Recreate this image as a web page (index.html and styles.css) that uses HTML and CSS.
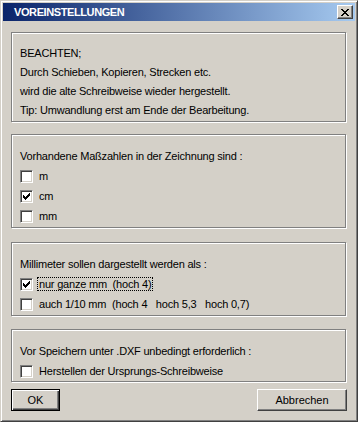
FILE: index.html
```html
<!DOCTYPE html>
<html lang="de">
<head>
  <meta charset="UTF-8" />
  <title>Voreinstellungen</title>
  <link rel="stylesheet" href="styles.css">
</head>
<body>
  <div class="window">
    <div class="titlebar">
      <span class="title">VOREINSTELLUNGEN</span>
      <button class="close" title="Schließen">
        <svg width="8" height="7" viewBox="0 0 8 7" shape-rendering="crispEdges">
          <path d="M0 0h2v1h-2zM6 0h2v1h-2zM1 1h2v1h-2zM5 1h2v1h-2zM2 2h4v1h-4zM3 3h2v1h-2zM2 4h4v1h-4zM1 5h2v1h-2zM5 5h2v1h-2zM0 6h2v1h-2zM6 6h2v1h-2z" fill="#000"/>
        </svg>
      </button>
    </div>

    <div class="group note">
      <div class="line">BEACHTEN;</div>
      <div class="line">Durch Schieben, Kopieren, Strecken etc.</div>
      <div class="line">wird die alte Schreibweise wieder hergestellt.</div>
      <div class="line">Tip: Umwandlung erst am Ende der Bearbeitung.</div>
    </div>

    <div class="group units">
      <div class="line">Vorhandene Maßzahlen in der Zeichnung sind :</div>
      <label class="check"><span class="box"><svg class="tick" width="7" height="7" viewBox="0 0 7 7" shape-rendering="crispEdges"><path d="M6 0h1v3h-1zM5 1h1v3h-1zM4 2h1v3h-1zM0 2h1v3h-1zM1 3h1v3h-1zM3 3h1v3h-1zM2 4h1v3h-1z"/></svg></span><span class="text">m</span></label>
      <label class="check"><span class="box checked"><svg class="tick" width="7" height="7" viewBox="0 0 7 7" shape-rendering="crispEdges"><path d="M6 0h1v3h-1zM5 1h1v3h-1zM4 2h1v3h-1zM0 2h1v3h-1zM1 3h1v3h-1zM3 3h1v3h-1zM2 4h1v3h-1z"/></svg></span><span class="text">cm</span></label>
      <label class="check"><span class="box"><svg class="tick" width="7" height="7" viewBox="0 0 7 7" shape-rendering="crispEdges"><path d="M6 0h1v3h-1zM5 1h1v3h-1zM4 2h1v3h-1zM0 2h1v3h-1zM1 3h1v3h-1zM3 3h1v3h-1zM2 4h1v3h-1z"/></svg></span><span class="text">mm</span></label>
    </div>

    <div class="group millis">
      <div class="line">Millimeter sollen dargestellt werden als :</div>
      <label class="check"><span class="box checked"><svg class="tick" width="7" height="7" viewBox="0 0 7 7" shape-rendering="crispEdges"><path d="M6 0h1v3h-1zM5 1h1v3h-1zM4 2h1v3h-1zM0 2h1v3h-1zM1 3h1v3h-1zM3 3h1v3h-1zM2 4h1v3h-1z"/></svg></span><span class="text focus">nur ganze mm  (hoch 4)</span></label>
      <label class="check"><span class="box"><svg class="tick" width="7" height="7" viewBox="0 0 7 7" shape-rendering="crispEdges"><path d="M6 0h1v3h-1zM5 1h1v3h-1zM4 2h1v3h-1zM0 2h1v3h-1zM1 3h1v3h-1zM3 3h1v3h-1zM2 4h1v3h-1z"/></svg></span><span class="text">auch 1/10 mm  (hoch 4   hoch 5,3   hoch 0,7)</span></label>
    </div>

    <div class="group dxf">
      <div class="line">Vor Speichern unter .DXF unbedingt erforderlich :</div>
      <label class="check"><span class="box"><svg class="tick" width="7" height="7" viewBox="0 0 7 7" shape-rendering="crispEdges"><path d="M6 0h1v3h-1zM5 1h1v3h-1zM4 2h1v3h-1zM0 2h1v3h-1zM1 3h1v3h-1zM3 3h1v3h-1zM2 4h1v3h-1z"/></svg></span><span class="text">Herstellen der Ursprungs-Schreibweise</span></label>
    </div>

    <div class="buttons">
      <button class="btn default">OK</button>
      <button class="btn cancel">Abbrechen</button>
    </div>
  </div>

  <script>
    // Kästchen an- und abhaken
    document.querySelectorAll(".check").forEach(item => {
      item.addEventListener("click", () => {
        item.querySelector(".box").classList.toggle("checked");
      });
    });
  </script>
</body>
</html>
```

FILE: styles.css
```css
* {
  box-sizing: border-box;
}
body {
  margin: 0;
  background: #d4d0c8;
  font-family: "Liberation Sans", Arial, sans-serif;
  font-size: 11px;
  letter-spacing: -0.2px;
  color: #000;
}
.window {
  width: 358px;
  height: 422px;
  padding: 2px;
  background: #d4d0c8;
  border: 1px solid;
  border-color: #d4d0c8 #404040 #404040 #d4d0c8;
  box-shadow: inset 1px 1px #fff, inset -1px -1px #808080;
  display: flex;
  flex-direction: column;
}
.titlebar {
  height: 18px;
  display: flex;
  align-items: center;
  justify-content: space-between;
  padding: 0 2px 0 11px;
  background: linear-gradient(to right, #0a246a, #a6caf0);
}
.title {
  color: #fff;
  font-weight: bold;
  font-size: 11px;
  letter-spacing: -0.4px;
}
.close {
  width: 16px;
  height: 14px;
  padding: 0;
  display: flex;
  align-items: center;
  justify-content: center;
  background: #d4d0c8;
  border: 1px solid;
  border-color: #fff #404040 #404040 #fff;
  box-shadow: inset -1px -1px #808080;
}
.group {
  margin: 0 9px 0 8px;
  padding: 12px 0 0 8px;
  border: 1px solid #808080;
  box-shadow: inset 1px 1px #fff, 1px 1px #fff;
}
.note {
  margin-top: 11px;
  padding-top: 11px;
  padding-bottom: 1px;
}
.units {
  margin-top: 12px;
  padding-bottom: 1px;
}
.millis {
  margin-top: 14px;
  padding-bottom: 1px;
}
.dxf {
  margin-top: 13px;
}
.line {
  height: 19px;
  line-height: 19px;
  white-space: nowrap;
}
.check {
  height: 20px;
  display: flex;
  align-items: center;
  gap: 6px;
  white-space: pre;
}
.box {
  width: 13px;
  height: 13px;
  flex: none;
  padding: 2px;
  background: #fff;
  border: 1px solid;
  border-color: #808080 #fff #fff #808080;
  box-shadow: inset 1px 1px #404040, inset -1px -1px #d4d0c8;
}
.tick {
  display: block;
  visibility: hidden;
}
.box.checked .tick {
  visibility: visible;
}
.text.focus {
  margin-left: -2px;
  padding: 0 1px;
  border: 1px dotted #000;
}
.buttons {
  display: flex;
  justify-content: space-between;
  margin: 7px 8px 0 8px;
}
.btn {
  height: 22px;
  padding: 0;
  font-family: inherit;
  font-size: 11px;
  color: #000;
  background: #d4d0c8;
}
.default {
  width: 49px;
  border: 1px solid #000;
  box-shadow: inset 1px 1px #fff, inset -1px -1px #404040, inset -2px -2px #808080;
}
.cancel {
  width: 90px;
  border: 1px solid;
  border-color: #fff #404040 #404040 #fff;
  box-shadow: inset -1px -1px #808080;
}
```
